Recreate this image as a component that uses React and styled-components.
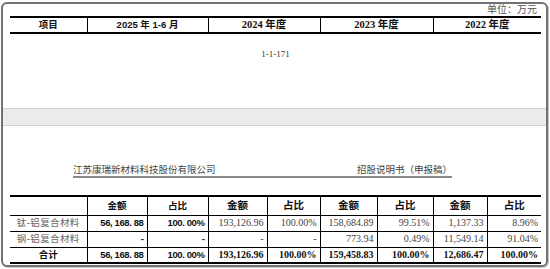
import React from "react";
import styled, { createGlobalStyle } from "styled-components";

const GlobalStyle = createGlobalStyle`
  html, body { margin: 0; padding: 0; background: #fff; }
  body { width: 550px; height: 269px; overflow: hidden; }
`;

const serif = `"Liberation Serif", "Noto Sans CJK SC", serif`;
const sans = `"Liberation Sans", "Noto Sans CJK SC", sans-serif`;

const topCols = [77, 121, 112, 113, 108];
const bottomCols = [77, 60, 61, 59, 53, 57, 56, 54, 54];

const rows = [
  { label: "钛-铝复合材料", cells: ["56, 168. 88", "100. 00%", "193,126.96", "100.00%", "158,684.89", "99.51%", "1,137.33", "8.96%"] },
  { label: "钢-铝复合材料", cells: ["-", "-", "-", "-", "773.94", "0.49%", "11,549.14", "91.04%"] },
];
const total = ["56, 168. 88", "100. 00%", "193,126.96", "100.00%", "159,458.83", "100.00%", "12,686.47", "100.00%"];

function App() {
  return (
    <>
      <GlobalStyle />
      <Frame>
        <TopPage>
          <Unit>单位：万元</Unit>
          <Table>
            <colgroup>
              {topCols.map((w, i) => <col key={i} style={{ width: w }} />)}
            </colgroup>
            <tbody>
              <Row $h={15}>
                <HeadCell $sans>项目</HeadCell>
                <HeadCell $sans>2025 年 1-6 月</HeadCell>
                <HeadCell>2024 年度</HeadCell>
                <HeadCell>2023 年度</HeadCell>
                <HeadCell>2022 年度</HeadCell>
              </Row>
            </tbody>
          </Table>
          <PageNo>1-1-171</PageNo>
        </TopPage>
        <PageBreak />
        <BottomPage>
          <RunningHead>
            <span>江苏康瑞新材料科技股份有限公司</span>
            <span>招股说明书（申报稿）</span>
          </RunningHead>
          <Table>
            <colgroup>
              {bottomCols.map((w, i) => <col key={i} style={{ width: w }} />)}
            </colgroup>
            <tbody>
              <Row $h={19}>
                <HeadCell />
                <HeadCell $sans>金额</HeadCell>
                <HeadCell $sans>占比</HeadCell>
                {["金额", "占比", "金额", "占比", "金额", "占比"].map((t, i) => (
                  <HeadCell key={i}>{t}</HeadCell>
                ))}
              </Row>
              {rows.map((r) => (
                <Row $h={16} key={r.label}>
                  <Label>{r.label}</Label>
                  {r.cells.map((c, i) => (
                    <Num key={i} $sans={i < 2}>{c}</Num>
                  ))}
                </Row>
              ))}
              <Row $h={16}>
                <HeadCell $sans>合计</HeadCell>
                {total.map((c, i) => (
                  <Num key={i} $sans={i < 2} $bold>{c}</Num>
                ))}
              </Row>
            </tbody>
          </Table>
        </BottomPage>
      </Frame>
    </>
  );
}

const Frame = styled.div`
  box-sizing: border-box;
  margin: 2px 0 0 1px;
  width: 547px;
  height: 265px;
  border: 2px solid #727272;
  border-radius: 6px;
  box-shadow: 1px 1px 0 #c8c8c8;
  background: #fff;
  display: flex;
  flex-direction: column;
  overflow: hidden;
`;

const TopPage = styled.div`
  height: 103px;
  flex: none;
  padding: 1px 5px 0 7px;
  display: flex;
  flex-direction: column;
`;

const Unit = styled.div`
  font-family: ${serif};
  font-size: 10px;
  line-height: 10px;
  color: #555;
  text-align: right;
  padding-right: 4px;
  margin-bottom: 1px;
`;

const Table = styled.table`
  border-collapse: collapse;
  table-layout: fixed;
  width: 531px;
  border-top: 2px solid #000;
  border-bottom: 2px solid #000;
`;

const Row = styled.tr`
  height: ${(p) => p.$h}px;
`;

const Cell = styled.td`
  border-left: 1px solid #000;
  border-top: 1px solid #000;
  padding: 0 3px;
  white-space: nowrap;
  line-height: 14px;
  &:first-child { border-left: none; }
`;

const HeadCell = styled(Cell)`
  text-align: center;
  font-weight: bold;
  font-family: ${(p) => (p.$sans ? sans : serif)};
  font-size: ${(p) => (p.$sans ? "9.5px" : "10.5px")};
  color: #111;
`;

const Label = styled(Cell)`
  font-family: ${serif};
  font-size: 9.5px;
  color: #666;
  text-align: center;
  letter-spacing: 0.4px;
  padding: 0;
`;

const Num = styled(Cell)`
  text-align: right;
  font-family: ${(p) => (p.$sans ? sans : serif)};
  font-size: ${(p) => (p.$sans ? "9.5px" : "10px")};
  letter-spacing: ${(p) => (p.$sans ? "-0.4px" : "0")};
  font-weight: ${(p) => (p.$sans || p.$bold ? "bold" : "normal")};
  color: ${(p) => (p.$sans || p.$bold ? "#111" : "#444")};
`;

const PageNo = styled.div`
  margin-top: 15px;
  text-align: center;
  font-family: ${serif};
  font-size: 9px;
  color: #333;
`;

const PageBreak = styled.div`
  height: 16px;
  flex: none;
  background: #ebebeb;
  border-top: 1px solid #d0d0d0;
  border-bottom: 1px solid #d0d0d0;
`;

const BottomPage = styled.div`
  flex: 1;
  padding: 38px 5px 0 7px;
  display: flex;
  flex-direction: column;
`;

const RunningHead = styled.div`
  margin: 0 0 17px 63px;
  width: 379px;
  display: flex;
  justify-content: space-between;
  font-family: ${serif};
  font-size: 9.5px;
  line-height: 12px;
  color: #444;
  border-bottom: 2px solid #8a8a8a;
`;

export default App;
